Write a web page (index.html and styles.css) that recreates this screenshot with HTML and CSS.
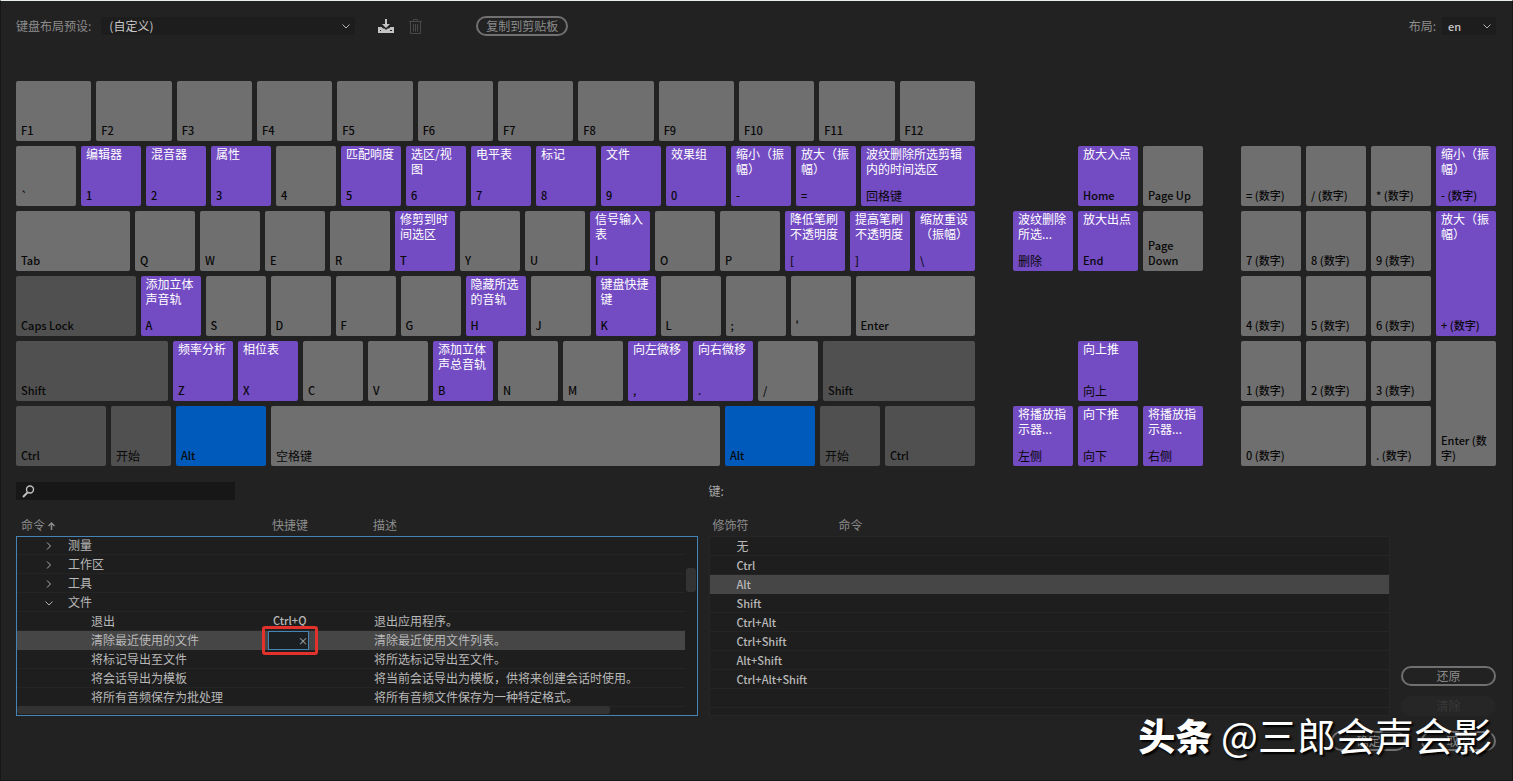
FILE: index.html
```
<!DOCTYPE html>
<html lang="zh-CN">
<head>
    <meta charset="UTF-8">
    <meta name="viewport" content="width=device-width, initial-scale=1.0">
    <title>键盘快捷键</title>
    <link rel="stylesheet" href="styles.css">
</head>
<body>
    <main class="dialog">
        <header class="toolbar">
            <label for="preset">键盘布局预设:</label>
            <span class="select preset">
                <select id="preset"><option>(自定义)</option></select>
                <svg class="arrow" viewBox="0 0 8 5"><path d="M0.5 0.5L4 4L7.5 0.5"/></svg>
            </span>
            <button class="icon-btn" type="button" aria-label="存储">
                <svg width="16" height="14" viewBox="0 0 16 14"><path fill="#c4c4c4" d="M7 0h2v5h3L8 9L4 5h3zM0 8h3.500L5 9.500h1.500L8 11l1.500-1.500H11L12.500 8H16v6H0z"/><path fill="#222" d="M2 11h1v1H2zM12 11h2v1h-2z"/></svg>
            </button>
            <button class="icon-btn trash" type="button" aria-label="删除" disabled>
                <svg width="13" height="15" viewBox="0 0 13 15" fill="none" stroke="#484848"><path d="M0 2.500h13M4.500 2V.5h4V2M1.500 3v11.500h10V3M4.500 5v7.500M6.500 5v7.500M8.500 5v7.500"/></svg>
            </button>
            <button class="btn copy" type="button">复制到剪贴板</button>
            <label class="lang-label" for="lang">布局:</label>
            <span class="select lang">
                <select id="lang"><option>en</option></select>
                <svg class="arrow" viewBox="0 0 8 5"><path d="M0.5 0.5L4 4L7.5 0.5"/></svg>
            </span>
        </header>

        <section class="keyboard">
            <div class="keys">
                <div class="row">
                    <button class="key grow"><span class="cap">F1</span></button>
                    <button class="key grow"><span class="cap">F2</span></button>
                    <button class="key grow"><span class="cap">F3</span></button>
                    <button class="key grow"><span class="cap">F4</span></button>
                    <button class="key grow"><span class="cap">F5</span></button>
                    <button class="key grow"><span class="cap">F6</span></button>
                    <button class="key grow"><span class="cap">F7</span></button>
                    <button class="key grow"><span class="cap">F8</span></button>
                    <button class="key grow"><span class="cap">F9</span></button>
                    <button class="key grow"><span class="cap">F10</span></button>
                    <button class="key grow"><span class="cap">F11</span></button>
                    <button class="key grow"><span class="cap">F12</span></button>
                </div>
                <div class="row">
                    <button class="key"><span class="cap">`</span></button>
                    <button class="key used"><span class="cmd">编辑器</span><span class="cap">1</span></button>
                    <button class="key used"><span class="cmd">混音器</span><span class="cap">2</span></button>
                    <button class="key used"><span class="cmd">属性</span><span class="cap">3</span></button>
                    <button class="key"><span class="cap">4</span></button>
                    <button class="key used"><span class="cmd">匹配响度</span><span class="cap">5</span></button>
                    <button class="key used"><span class="cmd">选区/视图</span><span class="cap">6</span></button>
                    <button class="key used"><span class="cmd">电平表</span><span class="cap">7</span></button>
                    <button class="key used"><span class="cmd">标记</span><span class="cap">8</span></button>
                    <button class="key used"><span class="cmd">文件</span><span class="cap">9</span></button>
                    <button class="key used"><span class="cmd">效果组</span><span class="cap">0</span></button>
                    <button class="key used"><span class="cmd">缩小（振幅）</span><span class="cap">-</span></button>
                    <button class="key used"><span class="cmd">放大（振幅）</span><span class="cap">=</span></button>
                    <button class="key used grow"><span class="cmd">波纹删除所选剪辑内的时间选区</span><span class="cap zh">回格键</span></button>
                </div>
                <div class="row">
                    <button class="key grow"><span class="cap">Tab</span></button>
                    <button class="key"><span class="cap">Q</span></button>
                    <button class="key"><span class="cap">W</span></button>
                    <button class="key"><span class="cap">E</span></button>
                    <button class="key"><span class="cap">R</span></button>
                    <button class="key used"><span class="cmd">修剪到时间选区</span><span class="cap">T</span></button>
                    <button class="key"><span class="cap">Y</span></button>
                    <button class="key"><span class="cap">U</span></button>
                    <button class="key used"><span class="cmd">信号输入表</span><span class="cap">I</span></button>
                    <button class="key"><span class="cap">O</span></button>
                    <button class="key"><span class="cap">P</span></button>
                    <button class="key used"><span class="cmd">降低笔刷不透明度</span><span class="cap">[</span></button>
                    <button class="key used"><span class="cmd">提高笔刷不透明度</span><span class="cap">]</span></button>
                    <button class="key used"><span class="cmd">缩放重设（振幅）</span><span class="cap">\</span></button>
                </div>
                <div class="row">
                    <button class="key mod grow"><span class="cap">Caps Lock</span></button>
                    <button class="key used"><span class="cmd">添加立体声音轨</span><span class="cap">A</span></button>
                    <button class="key"><span class="cap">S</span></button>
                    <button class="key"><span class="cap">D</span></button>
                    <button class="key"><span class="cap">F</span></button>
                    <button class="key"><span class="cap">G</span></button>
                    <button class="key used"><span class="cmd">隐藏所选的音轨</span><span class="cap">H</span></button>
                    <button class="key"><span class="cap">J</span></button>
                    <button class="key used"><span class="cmd">键盘快捷键</span><span class="cap">K</span></button>
                    <button class="key"><span class="cap">L</span></button>
                    <button class="key"><span class="cap">;</span></button>
                    <button class="key"><span class="cap">'</span></button>
                    <button class="key grow"><span class="cap">Enter</span></button>
                </div>
                <div class="row">
                    <button class="key mod grow"><span class="cap">Shift</span></button>
                    <button class="key used"><span class="cmd">频率分析</span><span class="cap">Z</span></button>
                    <button class="key used"><span class="cmd">相位表</span><span class="cap">X</span></button>
                    <button class="key"><span class="cap">C</span></button>
                    <button class="key"><span class="cap">V</span></button>
                    <button class="key used"><span class="cmd">添加立体声总音轨</span><span class="cap">B</span></button>
                    <button class="key"><span class="cap">N</span></button>
                    <button class="key"><span class="cap">M</span></button>
                    <button class="key used"><span class="cmd">向左微移</span><span class="cap">,</span></button>
                    <button class="key used"><span class="cmd">向右微移</span><span class="cap">.</span></button>
                    <button class="key"><span class="cap">/</span></button>
                    <button class="key mod grow"><span class="cap">Shift</span></button>
                </div>
                <div class="row">
                    <button class="key mod wide"><span class="cap">Ctrl</span></button>
                    <button class="key mod"><span class="cap zh">开始</span></button>
                    <button class="key held wide"><span class="cap">Alt</span></button>
                    <button class="key grow"><span class="cap zh">空格键</span></button>
                    <button class="key held wide"><span class="cap">Alt</span></button>
                    <button class="key mod"><span class="cap zh">开始</span></button>
                    <button class="key mod wide"><span class="cap">Ctrl</span></button>
                </div>
            </div>

            <div class="pad nav">
                <button class="key used home"><span class="cmd">放大入点</span><span class="cap">Home</span></button>
                <button class="key"><span class="cap">Page Up</span></button>
                <button class="key used"><span class="cmd">波纹删除所选...</span><span class="cap zh">删除</span></button>
                <button class="key used"><span class="cmd">放大出点</span><span class="cap">End</span></button>
                <button class="key"><span class="cap">Page Down</span></button>
                <button class="key used up"><span class="cmd">向上推</span><span class="cap zh">向上</span></button>
                <button class="key used left"><span class="cmd">将播放指示器...</span><span class="cap zh">左侧</span></button>
                <button class="key used down"><span class="cmd">向下推</span><span class="cap zh">向下</span></button>
                <button class="key used right"><span class="cmd">将播放指示器...</span><span class="cap zh">右侧</span></button>
            </div>

            <div class="pad num">
                <button class="key"><span class="cap">= (数字)</span></button>
                <button class="key"><span class="cap">/ (数字)</span></button>
                <button class="key"><span class="cap">* (数字)</span></button>
                <button class="key used"><span class="cmd">缩小（振幅）</span><span class="cap">- (数字)</span></button>
                <button class="key"><span class="cap">7 (数字)</span></button>
                <button class="key"><span class="cap">8 (数字)</span></button>
                <button class="key"><span class="cap">9 (数字)</span></button>
                <button class="key used tall"><span class="cmd">放大（振幅）</span><span class="cap">+ (数字)</span></button>
                <button class="key"><span class="cap">4 (数字)</span></button>
                <button class="key"><span class="cap">5 (数字)</span></button>
                <button class="key"><span class="cap">6 (数字)</span></button>
                <button class="key"><span class="cap">1 (数字)</span></button>
                <button class="key"><span class="cap">2 (数字)</span></button>
                <button class="key"><span class="cap">3 (数字)</span></button>
                <button class="key tall"><span class="cap">Enter (数字)</span></button>
                <button class="key zero"><span class="cap">0 (数字)</span></button>
                <button class="key"><span class="cap">. (数字)</span></button>
            </div>
        </section>

        <section class="lower">
            <div class="panel">
                <div class="panel-top">
                    <span class="search">
                        <svg width="13" height="13" viewBox="0 0 13 13" fill="none" stroke="#c0c0c0"><circle cx="8" cy="4.500" r="3.500" stroke-width="1.400"/><path d="M5.500 7.500L1 12" stroke-width="2"/></svg>
                        <input type="search" aria-label="搜索">
                    </span>
                </div>
                <table class="list commands">
                    <thead>
                        <tr>
                            <th>命令 <svg width="7" height="8" viewBox="0 0 7 8"><path d="M3.500 8V1.500M0.500 4L3.500 1L6.500 4" fill="none" stroke="#8a8a8a" stroke-width="1.500"/></svg></th>
                            <th>快捷键</th>
                            <th>描述</th>
                        </tr>
                    </thead>
                    <tbody>
                        <tr class="group"><td><svg class="twisty" viewBox="0 0 8 8"><path d="M2 0.500L5.500 4L2 7.500"/></svg>测量</td><td></td><td></td></tr>
                        <tr class="group"><td><svg class="twisty" viewBox="0 0 8 8"><path d="M2 0.500L5.500 4L2 7.500"/></svg>工作区</td><td></td><td></td></tr>
                        <tr class="group"><td><svg class="twisty" viewBox="0 0 8 8"><path d="M2 0.500L5.500 4L2 7.500"/></svg>工具</td><td></td><td></td></tr>
                        <tr class="group"><td><svg class="twisty" viewBox="0 0 8 8"><path d="M0.500 2.500L4 6L7.500 2.500"/></svg>文件</td><td></td><td></td></tr>
                        <tr><td>退出</td><td class="combo">Ctrl+Q</td><td>退出应用程序。</td></tr>
                        <tr class="selected">
                            <td>清除最近使用的文件</td>
                            <td><span class="shortcut"><input type="text" aria-label="快捷键"><button type="button" aria-label="清除快捷键">×</button></span></td>
                            <td>清除最近使用文件列表。</td>
                        </tr>
                        <tr><td>将标记导出至文件</td><td></td><td>将所选标记导出至文件。</td></tr>
                        <tr><td>将会话导出为模板</td><td></td><td>将当前会话导出为模板，供将来创建会话时使用。</td></tr>
                        <tr><td>将所有音频保存为批处理</td><td></td><td>将所有音频文件保存为一种特定格式。</td></tr>
                    </tbody>
                </table>
                <span class="thumb-v"></span>
                <span class="thumb-h"></span>
            </div>

            <div class="panel">
                <div class="panel-top">键:</div>
                <table class="list modifiers">
                    <thead>
                        <tr><th>修饰符</th><th>命令</th></tr>
                    </thead>
                    <tbody>
                        <tr><td>无</td><td></td></tr>
                        <tr><td class="combo">Ctrl</td><td></td></tr>
                        <tr class="selected"><td class="combo">Alt</td><td></td></tr>
                        <tr><td class="combo">Shift</td><td></td></tr>
                        <tr><td class="combo">Ctrl+Alt</td><td></td></tr>
                        <tr><td class="combo">Ctrl+Shift</td><td></td></tr>
                        <tr><td class="combo">Alt+Shift</td><td></td></tr>
                        <tr><td class="combo">Ctrl+Alt+Shift</td><td></td></tr>
                        <tr><td></td><td></td></tr>
                    </tbody>
                </table>
            </div>

            <div class="actions">
                <button class="btn" type="button">还原</button>
                <button class="btn" type="button" disabled>清除</button>
            </div>
        </section>

        <footer class="footer">
            <button class="btn" type="button">确定</button>
            <button class="btn" type="button">取消</button>
        </footer>
        <div class="watermark"><b>头条</b> @三郎会声会影</div>
    </main>
</body>
</html>
```
FILE: styles.css
```
* {
    box-sizing: border-box;
}
body {
    margin: 0;
    background: #222222;
    color: #a8a8a8;
    font-family: "Noto Sans CJK SC", sans-serif;
    font-size: 12px;
    line-height: 18px;
}
button, input, select {
    font: inherit;
    color: inherit;
}
svg {
    flex: none;
}
.dialog {
    position: relative;
    min-height: 100vh;
    padding: 15px 16px 0 15px;
    border: 1px solid #171717;
    border-top-color: #e8eeea;
}

/* toolbar */
.toolbar {
    display: flex;
    align-items: center;
    height: 20px;
    margin-bottom: 45px;
    color: #8c8c8c;
}
.select {
    position: relative;
    height: 18px;
    background: #1d1d1d;
    color: #c8c8c8;
}
.select select {
    display: block;
    width: 100%;
    height: 18px;
    padding: 0 8px;
    border: 0;
    appearance: none;
    background: none;
    line-height: 18px;
}
.arrow {
    position: absolute;
    top: 7px;
    right: 5px;
    width: 8px;
    height: 5px;
    fill: none;
    stroke: #b4b4b4;
    pointer-events: none;
}
.preset {
    width: 254px;
    margin-left: 10px;
}
.lang {
    width: 54px;
    margin-left: 6px;
}
.lang select {
    padding: 0 6px;
    font-size: 11px;
    font-weight: 500;
}
.lang-label {
    margin-left: auto;
}
.icon-btn {
    display: flex;
    margin-left: 23px;
    padding: 0;
    border: 0;
    background: none;
}
.trash {
    margin-left: 15px;
}
.btn {
    height: 20px;
    padding: 0 8px;
    border: 2px solid #707070;
    border-radius: 10px;
    background: none;
    color: #8c8c8c;
    line-height: 16px;
}
.btn:disabled {
    border-color: #262626;
    background: #262626;
    color: #383838;
}
.copy {
    margin-left: 54px;
}

/* keyboard */
.keyboard {
    display: flex;
    gap: 38px;
}
.keys {
    display: flex;
    flex: 1;
    flex-direction: column;
    gap: 5px;
}
.row {
    display: flex;
    gap: 5px;
}
.key {
    display: flex;
    flex: none;
    flex-direction: column;
    width: 60px;
    height: 60px;
    padding: 0 5px 3px;
    border: 0;
    border-radius: 2px;
    background: #6f6f6f;
    color: #080808;
    line-height: 15px;
    text-align: left;
}
.key.grow {
    flex: 1;
    width: auto;
}
.key.wide {
    width: 90px;
}
.key.mod {
    background: #505050;
}
.key.used {
    background: #734bc3;
}
.key.held {
    background: #005abb;
}
.cmd {
    color: #fff;
}
.cap {
    margin-top: auto;
    font-size: 11px;
    font-weight: 500;
}
.cap.zh {
    font-size: 12px;
    font-weight: normal;
}
.pad {
    display: grid;
    grid-auto-rows: 60px;
    gap: 5px;
    align-content: end;
}
.pad .key {
    width: auto;
    height: auto;
}
.nav {
    grid-template-columns: repeat(3, 60px);
}
.num {
    grid-template-columns: repeat(4, 60px);
}
.home {
    grid-column: 2;
}
.up {
    grid-area: 4 / 2;
}
.left {
    grid-area: 5 / 1;
}
.down {
    grid-area: 5 / 2;
}
.right {
    grid-area: 5 / 3;
}
.tall {
    grid-column: 4;
    grid-row: span 2;
}
.zero {
    grid-column: span 2;
}

/* lists */
.lower {
    display: grid;
    grid-template-columns: 1fr 1fr 95px;
    gap: 11px;
    margin-top: 16px;
}
.panel {
    position: relative;
}
.panel-top {
    height: 34px;
}
.search {
    display: flex;
    align-items: center;
    width: 219px;
    height: 18px;
    padding-left: 6px;
    background: #171717;
}
.search input {
    width: 100%;
    border: 0;
    outline: 0;
    background: none;
}
.list, .list thead, .list tbody {
    display: block;
}
.list tr {
    display: grid;
}
.list th, .list td {
    padding: 0;
    font-weight: normal;
    text-align: left;
    white-space: nowrap;
}
.list th {
    height: 20px;
    color: #8c8c8c;
}
.list tbody {
    height: 180px;
    overflow: hidden;
    border: 1px solid #262626;
    background: #1e1e1e;
    color: #b8b8b8;
}
.list tbody tr {
    height: 19px;
    border-bottom: 1px solid #252525;
}
.list tbody .selected {
    border-color: #464646;
    background: #464646;
}
.list .combo {
    font-size: 11px;
    font-weight: 500;
}
.commands tr {
    grid-template-columns: 251px 101px 1fr;
    padding-left: 5px;
}
.commands tbody {
    border-color: #4584b5;
}
.commands tbody tr {
    grid-template-columns: 256px 101px 1fr;
    margin-right: 12px;
    padding-left: 0;
}
.commands tbody tr:first-child {
    height: 18px;
}
.commands td {
    line-height: 17px;
}
.commands .group:first-child td {
    line-height: 16px;
}
.commands td:first-child {
    padding-left: 74px;
}
.commands .group td:first-child {
    padding-left: 28px;
}
.twisty {
    width: 8px;
    height: 8px;
    margin-right: 15px;
    fill: none;
    stroke: #b0b0b0;
}
.modifiers tr {
    grid-template-columns: 126px 1fr;
    padding-left: 4px;
}
.modifiers td:first-child {
    padding-left: 23px;
}
.shortcut {
    display: flex;
    position: relative;
    width: 41px;
    height: 19px;
    margin-left: -5px;
    background: #1b1f22;
    border: 1px solid #4584b5;
}
.shortcut input {
    width: 29px;
    height: 16px;
    padding: 0;
    border: 0;
    outline: 0;
    background: none;
}
.shortcut button {
    padding: 0;
    border: 0;
    background: none;
    font-size: 10px;
    line-height: 18px;
}
.shortcut::after {
    content: "";
    position: absolute;
    inset: -6px -10px -6px -7px;
    border: 3px solid #e3322b;
    border-radius: 3px;
    pointer-events: none;
}
.thumb-v, .thumb-h {
    position: absolute;
    border-radius: 3px;
    background: #333333;
}
.thumb-v {
    top: 86px;
    right: 2px;
    width: 10px;
    height: 24px;
}
.thumb-h {
    bottom: 2px;
    left: 1px;
    width: 87%;
    height: 8px;
}

/* buttons */
.actions {
    display: flex;
    flex-direction: column;
    justify-content: flex-end;
    gap: 10px;
}
.footer {
    display: flex;
    justify-content: flex-end;
    gap: 15px;
    margin-top: 15px;
}
.footer .btn {
    width: 75px;
}
.watermark {
    position: absolute;
    right: 20px;
    bottom: 21px;
    color: #fff;
    font-size: 39px;
    line-height: 48px;
    text-shadow: 2px 2px 2px #000;
}
.watermark b {
    font-size: 37px;
    font-weight: 900;
}
```
